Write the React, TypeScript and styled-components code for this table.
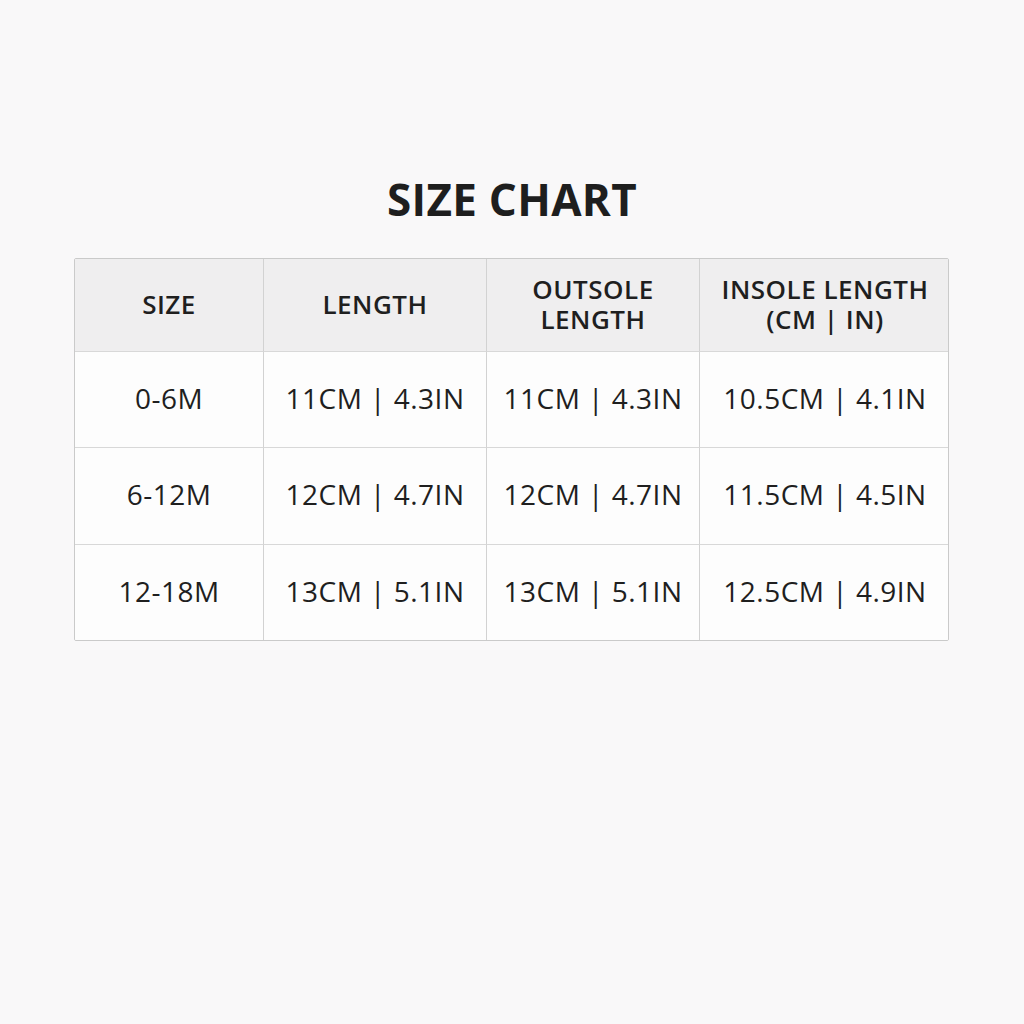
import React from "react";
import styled, { createGlobalStyle } from "styled-components";

const Global = createGlobalStyle`
  html, body { margin: 0; padding: 0; background: #f9f8f9; }
  body { font-family: "Open Sans", "Noto Sans", sans-serif; color: #1f1f1f; }
`;

const Page = styled.div`
  width: 1024px;
  height: 1024px;
  display: flex;
  flex-direction: column;
  align-items: center;
  padding-top: 170px;
  box-sizing: border-box;
`;

const Title = styled.h1`
  margin: 0 0 30px;
  font-size: 44px;
  line-height: 58px;
  font-weight: 700;
  letter-spacing: 0.3px;
  color: #1e1e1e;
`;

const Table = styled.div`
  display: grid;
  grid-template-columns: 189px 223px 213px 250px;
  grid-template-rows: 93px 96px 97px 95px;
  width: 875px;
  margin-left: -1px;
  border: 1px solid #cacaca;
  border-radius: 2px;
  background: #fdfdfd;
  box-sizing: border-box;
  overflow: hidden;
`;

const Cell = styled.div<{ $head?: boolean; $lastCol?: boolean; $lastRow?: boolean }>`
  display: flex;
  align-items: center;
  justify-content: center;
  text-align: center;
  padding-bottom: ${(p) => (p.$head ? "2px" : "4px")};
  box-sizing: border-box;
  background: ${(p) => (p.$head ? "#efeeef" : "#fdfdfd")};
  border-right: ${(p) => (p.$lastCol ? "none" : "1px solid #d2d2d2")};
  border-bottom: ${(p) => (p.$lastRow ? "none" : "1px solid #d8d8d8")};
  font-size: ${(p) => (p.$head ? "26px" : "28px")};
  font-weight: ${(p) => (p.$head ? 600 : 500)};
  letter-spacing: 0.5px;
  line-height: ${(p) => (p.$head ? "30px" : "32px")};
  color: #1f1f1f;
  white-space: pre-line;
`;

const headers = ["SIZE", "LENGTH", "OUTSOLE\nLENGTH", "INSOLE LENGTH\n(CM | IN)"];

const rows = [
  ["0-6M", "11CM | 4.3IN", "11CM | 4.3IN", "10.5CM | 4.1IN"],
  ["6-12M", "12CM | 4.7IN", "12CM | 4.7IN", "11.5CM | 4.5IN"],
  ["12-18M", "13CM | 5.1IN", "13CM | 5.1IN", "12.5CM | 4.9IN"],
];

export default function App() {
  return (
    <>
      <Global />
      <Page>
        <Title>SIZE CHART</Title>
        <Table>
          {headers.map((h, i) => (
            <Cell key={`h${i}`} $head $lastCol={i === 3}>
              {h}
            </Cell>
          ))}
          {rows.map((r, ri) =>
            r.map((c, ci) => (
              <Cell key={`${ri}-${ci}`} $lastCol={ci === 3} $lastRow={ri === rows.length - 1}>
                {c}
              </Cell>
            ))
          )}
        </Table>
      </Page>
    </>
  );
}
